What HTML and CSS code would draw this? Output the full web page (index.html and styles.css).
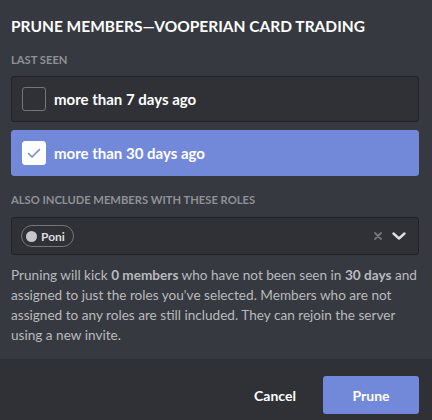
FILE: index.html
```html
<!DOCTYPE html>
<html>
<head>
<meta charset="utf-8">
<link rel="stylesheet" href="styles.css">
</head>
<body>
<div class="modal">
  <div class="body">
    <h1 class="title">Prune Members—Vooperian Card Trading</h1>
    <div class="label">Last Seen</div>
    <div class="options">
      <div class="option">
        <span class="box"></span>
        <span class="opt-text">more than 7 days ago</span>
      </div>
      <div class="option selected">
        <span class="box checked">
          <svg width="22" height="22" viewBox="0 0 22 22"><path d="M5.5 11.5 L9 15 L16.5 7.5" fill="none" stroke="#7289da" stroke-width="1.6" stroke-linecap="round" stroke-linejoin="round"/></svg>
        </span>
        <span class="opt-text">more than 30 days ago</span>
      </div>
    </div>
    <div class="label label2">Also include members with these roles</div>
    <div class="select">
      <span class="pill"><span class="dot"></span><span class="pill-text">Poni</span></span>
      <span class="icons">
        <svg class="clear" width="8" height="8" viewBox="0 0 8 8"><path d="M1 1 L7 7 M7 1 L1 7" stroke="#72767d" stroke-width="1.8" stroke-linecap="round"/></svg>
        <svg class="chev" width="14" height="8" viewBox="0 0 14 8"><path d="M1.5 1.5 L7 6.5 L12.5 1.5" fill="none" stroke="#dcddde" stroke-width="2.4" stroke-linecap="round" stroke-linejoin="round"/></svg>
      </span>
    </div>
    <p class="desc">Pruning will kick <strong>0 members</strong> who have not been seen in <strong>30 days</strong> and assigned to just the roles you've selected. Members who are not assigned to any roles are still included. They can rejoin the server using a new invite.</p>
  </div>
  <div class="footer">
    <button class="btn cancel">Cancel</button>
    <button class="btn prune">Prune</button>
  </div>
</div>
</body>
</html>
```
FILE: styles.css
```css
html, body {
  margin: 0;
  padding: 0;
  background: #36393f;
  font-family: "Lato", "Open Sans", sans-serif;
}
.modal {
  width: 432px;
  height: 420px;
  display: flex;
  flex-direction: column;
  overflow: hidden;
}
.body {
  padding: 16px 13px 0 11px;
  display: flex;
  flex-direction: column;
}
.title {
  margin: 0;
  font-size: 15.5px;
  line-height: 20px;
  font-weight: 700;
  text-transform: uppercase;
  color: #ffffff;
}
.label {
  margin-top: 16px;
  font-size: 11.2px;
  line-height: 16px;
  font-weight: 700;
  text-transform: uppercase;
  color: #8e9297;
}
.options {
  margin-top: 8px;
  display: flex;
  flex-direction: column;
  gap: 8px;
}
.option {
  height: 44px;
  border: 1px solid #202225;
  background: #2f3136;
  border-radius: 3px;
  display: flex;
  align-items: center;
  padding-left: 10px;
  gap: 8px;
}
.option.selected {
  background: #7289da;
  border-color: #7289da;
}
.box {
  width: 22px;
  height: 22px;
  border: 1px solid #72767d;
  border-radius: 3px;
  display: flex;
}
.box.checked {
  background: #ffffff;
  border-color: #ffffff;
}
.opt-text {
  font-size: 15px;
  font-weight: 700;
  color: #ffffff;
}
.label2 {
  margin-top: 16px;
}
.select {
  margin-top: 9px;
  height: 36px;
  border: 1px solid #202225;
  background: #2f3136;
  border-radius: 3px;
  display: flex;
  align-items: center;
  justify-content: space-between;
  padding: 0 12px 0 9px;
}
.pill {
  height: 20px;
  border: 1px solid #72767d;
  border-radius: 11px;
  display: flex;
  align-items: center;
  padding: 0 8px 0 4px;
  gap: 4px;
}
.dot {
  width: 11px;
  height: 11px;
  border-radius: 50%;
  background: #c4c6c9;
}
.pill-text {
  font-size: 12px;
  font-weight: 700;
  color: #dcddde;
}
.icons {
  display: flex;
  align-items: center;
  gap: 10px;
}
.desc {
  margin: 10px 0 0;
  font-size: 13.6px;
  line-height: 20px;
  color: #b9bbbe;
}
.desc strong {
  font-weight: 700;
}
.footer {
  margin-top: auto;
  height: 61px;
  background: #2f3136;
  display: flex;
  justify-content: flex-end;
  align-items: flex-start;
  padding: 17px 13px 0 0;
  box-sizing: border-box;
}
.btn {
  width: 96px;
  height: 38px;
  border: none;
  border-radius: 3px;
  font-family: "Lato", "Open Sans", sans-serif;
  font-size: 14px;
  font-weight: 700;
  color: #ffffff;
  cursor: pointer;
}
.cancel {
  background: transparent;
}
.prune {
  background: #7289da;
}
```
